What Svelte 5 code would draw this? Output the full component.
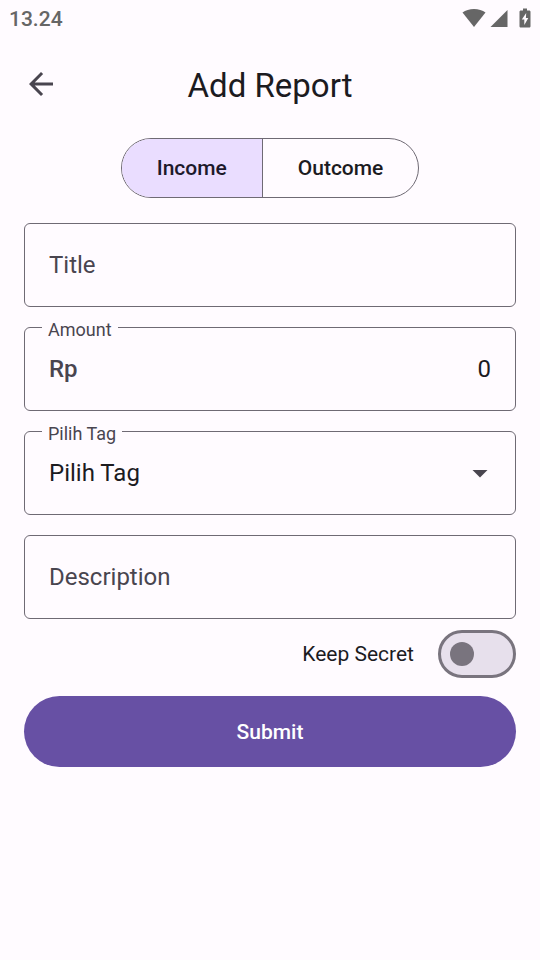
<script>
  let kind = $state('income');
  let title = $state('');
  let amount = $state('0');
  let tag = $state('');
  let description = $state('');
  let secret = $state(false);
</script>

<div class="screen">
  <div class="status">
    <span>13.24</span>
    <div class="status-icons">
      <svg width="24" height="20" viewBox="0 0 24 20" aria-hidden="true">
        <path d="M12 19 .5 4.600C3.500 2.200 7.500 1 12 1s8.500 1.200 11.500 3.600z" />
      </svg>
      <svg width="18" height="20" viewBox="0 0 18 20" aria-hidden="true">
        <path d="M.5 19 17.500 2v17z" />
      </svg>
      <svg class="battery" width="12" height="20" viewBox="0 0 12 20" aria-hidden="true">
        <path
          fill-rule="evenodd"
          d="M4 0.500h4v2h2.200c.7 0 1.300.6 1.300 1.300v14.400c0 .7-.6 1.300-1.300 1.300H1.800c-.7 0-1.300-.6-1.300-1.300V3.800c0-.7.600-1.300 1.300-1.300H4zM7.200 5 2.800 11.500h2.500V17L9.300 10H6.900z"
        />
      </svg>
    </div>
  </div>

  <header>
    <button class="back" type="button" aria-label="Back">
      <svg width="36" height="36" viewBox="0 0 24 24" aria-hidden="true">
        <path d="M20 11H7.830l5.590-5.590L12 4l-8 8 8 8 1.410-1.410L7.830 13H20z" />
      </svg>
    </button>
    <h1>Add Report</h1>
  </header>

  <form onsubmit={(e) => e.preventDefault()}>
    <div class="segments" role="group" aria-label="Report type">
      <button
        type="button"
        class:selected={kind === 'income'}
        aria-pressed={kind === 'income'}
        onclick={() => (kind = 'income')}>Income</button
      >
      <button
        type="button"
        class:selected={kind === 'outcome'}
        aria-pressed={kind === 'outcome'}
        onclick={() => (kind = 'outcome')}>Outcome</button
      >
    </div>

    <div class="fields">
      <div class="field">
        <input type="text" placeholder="Title" aria-label="Title" bind:value={title} />
      </div>

      <div class="field">
        <label for="amount">Amount</label>
        <span class="prefix">Rp</span>
        <input id="amount" class="number" type="text" inputmode="numeric" bind:value={amount} />
      </div>

      <div class="field">
        <label for="tag">Pilih Tag</label>
        <select id="tag" bind:value={tag}>
          <option value="">Pilih Tag</option>
        </select>
        <svg class="caret" width="36" height="36" viewBox="0 0 24 24" aria-hidden="true">
          <path d="m7 10 5 5 5-5z" />
        </svg>
      </div>

      <div class="field">
        <input
          type="text"
          placeholder="Description"
          aria-label="Description"
          bind:value={description}
        />
      </div>
    </div>

    <div class="secret">
      <label for="secret">Keep Secret</label>
      <input id="secret" type="checkbox" role="switch" bind:checked={secret} />
    </div>

    <button class="submit" type="submit">Submit</button>
  </form>
</div>

<style>
  :global(body) {
    background: #fffbff;
  }

  .screen {
    min-height: 100vh;
    box-sizing: border-box;
    background: #fffbff;
    color: #1c1b1f;
    font-family: Roboto, 'Noto Sans', sans-serif;
    font-size: 24px;
  }

  button,
  input,
  select {
    font: inherit;
    color: inherit;
    margin: 0;
    padding: 0;
    border: 0;
    background: none;
  }

  button {
    cursor: pointer;
  }

  svg {
    display: block;
    flex: none;
    fill: currentColor;
  }

  .status {
    display: flex;
    justify-content: space-between;
    align-items: center;
    height: 38px;
    padding: 0 9px;
    color: #666;
    font-size: 21px;
    font-weight: 500;
  }

  .status-icons {
    display: flex;
    gap: 4px;
    padding-bottom: 2px;
  }

  .battery {
    margin-left: 7px;
  }

  header {
    display: grid;
    grid-template-columns: 36px 1fr 36px;
    align-items: center;
    height: 96px;
    padding: 0 23px;
  }

  .back {
    color: #49454f;
    padding-bottom: 4px;
  }

  h1 {
    margin: 0;
    text-align: center;
    font-size: 33px;
    line-height: 42px;
    font-weight: 400;
  }

  form {
    display: flex;
    flex-direction: column;
    padding: 4px 24px 24px;
  }

  .segments {
    display: flex;
    align-self: center;
    height: 60px;
    box-sizing: border-box;
    border: 1px solid #6f6a74;
    border-radius: 30px;
    overflow: hidden;
  }

  .segments button {
    padding: 0 35px;
    font-size: 21px;
    font-weight: 500;
  }

  .segments button + button {
    border-left: 1px solid #6f6a74;
  }

  .segments .selected {
    background: #eaddff;
    color: #1d192b;
  }

  .fields {
    display: flex;
    flex-direction: column;
    gap: 21px;
    margin-top: 25px;
  }

  .field {
    position: relative;
    display: flex;
    align-items: center;
    height: 84px;
    box-sizing: border-box;
    padding: 0 24px;
    border: 1px solid #6f6a74;
    border-radius: 6px;
  }

  .field + .field {
    margin-top: -1px;
  }

  .field label {
    position: absolute;
    top: -10px;
    left: 17px;
    padding: 0 6px;
    background: #fffbff;
    color: #49454f;
    font-size: 18px;
    line-height: 24px;
  }

  .field input,
  .field select {
    flex: 1;
    min-width: 0;
    height: 100%;
    outline: none;
    appearance: none;
  }

  .field input::placeholder {
    color: #49454f;
    opacity: 1;
  }

  .field .number {
    text-align: right;
  }

  .prefix {
    color: #49454f;
    font-weight: 500;
  }

  .caret {
    margin-right: -7px;
    color: #49454f;
    pointer-events: none;
  }

  .secret {
    display: flex;
    justify-content: flex-end;
    align-items: center;
    gap: 24px;
    margin: 11px 0 18px;
    font-size: 21px;
  }

  .secret input {
    appearance: none;
    display: flex;
    align-items: center;
    width: 78px;
    height: 48px;
    box-sizing: border-box;
    padding: 0 9px;
    border: 3px solid #79747e;
    border-radius: 24px;
    background: #e7e0ec;
    cursor: pointer;
  }

  .secret input::before {
    content: '';
    width: 24px;
    height: 24px;
    border-radius: 50%;
    background: #79747e;
  }

  .secret input:checked {
    justify-content: flex-end;
    border-color: #6750a4;
    background: #6750a4;
  }

  .secret input:checked::before {
    background: #fff;
  }

  .submit {
    height: 71px;
    border-radius: 36px;
    background: #6750a4;
    color: #fff;
    font-size: 21px;
    font-weight: 500;
  }
</style>
